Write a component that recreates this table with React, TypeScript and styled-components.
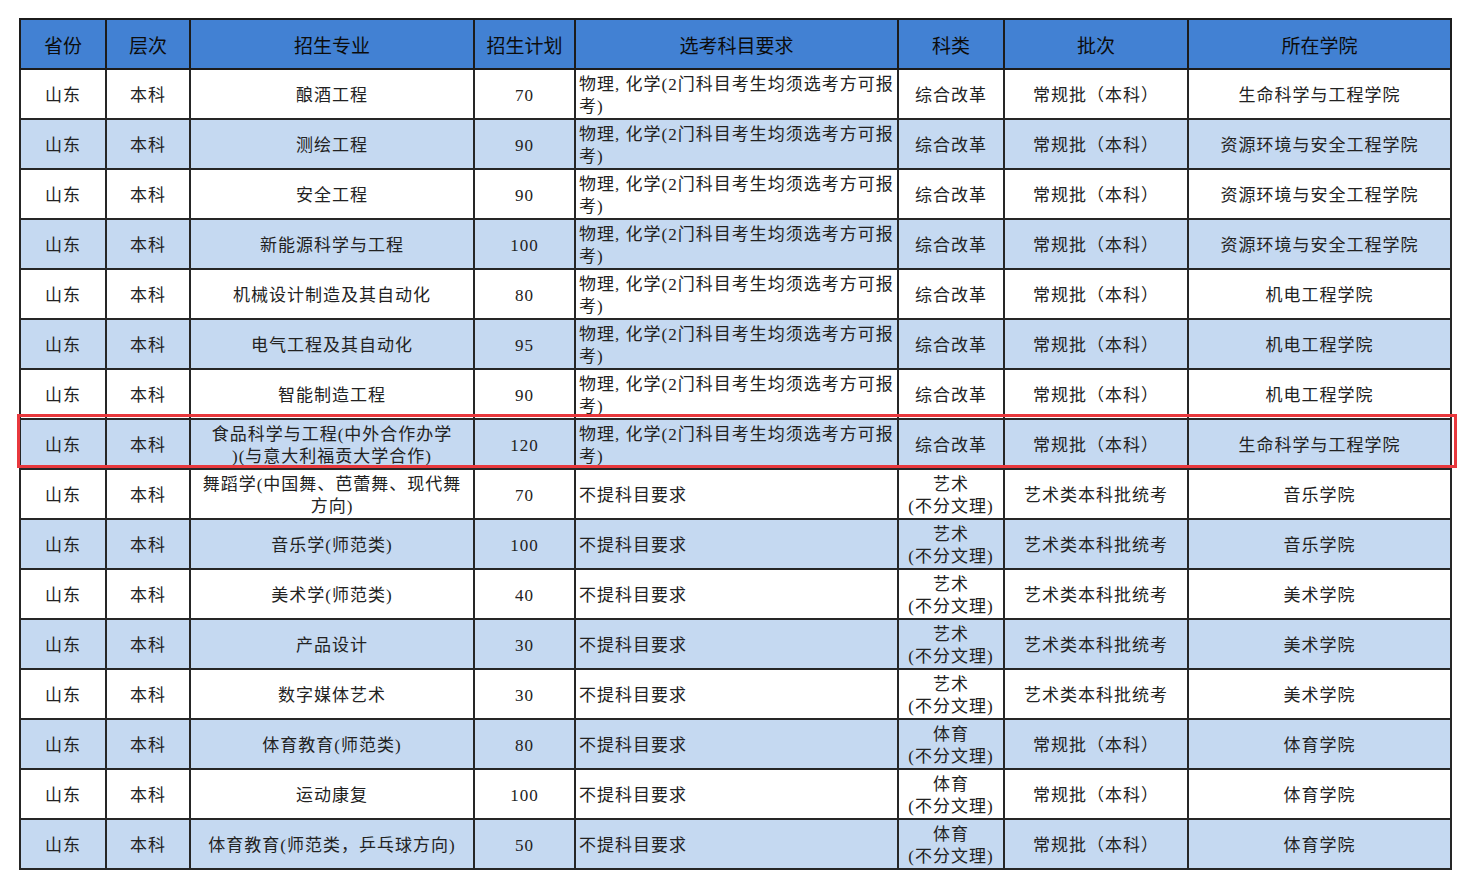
import React from 'react';
import styled, { createGlobalStyle } from 'styled-components';

type Row = {
  major: string[];
  plan: number;
  subjects: string[];
  kind: string[];
  batch: string;
  college: string;
};

const SCI = ['物理, 化学(2门科目考生均须选考方可报', '考)'];
const NONE = ['不提科目要求'];
const REFORM = ['综合改革'];
const ART = ['艺术', '(不分文理)'];
const PE = ['体育', '(不分文理)'];
const REGULAR = '常规批（本科）';
const ART_BATCH = '艺术类本科批统考';

const rows: Row[] = [
  { major: ['酿酒工程'], plan: 70, subjects: SCI, kind: REFORM, batch: REGULAR, college: '生命科学与工程学院' },
  { major: ['测绘工程'], plan: 90, subjects: SCI, kind: REFORM, batch: REGULAR, college: '资源环境与安全工程学院' },
  { major: ['安全工程'], plan: 90, subjects: SCI, kind: REFORM, batch: REGULAR, college: '资源环境与安全工程学院' },
  { major: ['新能源科学与工程'], plan: 100, subjects: SCI, kind: REFORM, batch: REGULAR, college: '资源环境与安全工程学院' },
  { major: ['机械设计制造及其自动化'], plan: 80, subjects: SCI, kind: REFORM, batch: REGULAR, college: '机电工程学院' },
  { major: ['电气工程及其自动化'], plan: 95, subjects: SCI, kind: REFORM, batch: REGULAR, college: '机电工程学院' },
  { major: ['智能制造工程'], plan: 90, subjects: SCI, kind: REFORM, batch: REGULAR, college: '机电工程学院' },
  {
    major: ['食品科学与工程(中外合作办学', ')(与意大利福贡大学合作)'],
    plan: 120,
    subjects: SCI,
    kind: REFORM,
    batch: REGULAR,
    college: '生命科学与工程学院',
  },
  { major: ['舞蹈学(中国舞、芭蕾舞、现代舞', '方向)'], plan: 70, subjects: NONE, kind: ART, batch: ART_BATCH, college: '音乐学院' },
  { major: ['音乐学(师范类)'], plan: 100, subjects: NONE, kind: ART, batch: ART_BATCH, college: '音乐学院' },
  { major: ['美术学(师范类)'], plan: 40, subjects: NONE, kind: ART, batch: ART_BATCH, college: '美术学院' },
  { major: ['产品设计'], plan: 30, subjects: NONE, kind: ART, batch: ART_BATCH, college: '美术学院' },
  { major: ['数字媒体艺术'], plan: 30, subjects: NONE, kind: ART, batch: ART_BATCH, college: '美术学院' },
  { major: ['体育教育(师范类)'], plan: 80, subjects: NONE, kind: PE, batch: REGULAR, college: '体育学院' },
  { major: ['运动康复'], plan: 100, subjects: NONE, kind: PE, batch: REGULAR, college: '体育学院' },
  { major: ['体育教育(师范类，乒乓球方向)'], plan: 50, subjects: NONE, kind: PE, batch: REGULAR, college: '体育学院' },
];

const columns = [
  { title: '省份', width: 86 },
  { title: '层次', width: 84 },
  { title: '招生专业', width: 284 },
  { title: '招生计划', width: 101 },
  { title: '选考科目要求', width: 323 },
  { title: '科类', width: 106 },
  { title: '批次', width: 184 },
  { title: '所在学院', width: 263 },
];

const HIGHLIGHT_ROW = 7;
const HEADER_H = 50;
const ROW_H = 50;

const Lines = ({ lines }: { lines: string[] }) => (
  <>
    {lines.map((l, i) => (
      <Line key={i}>{l}</Line>
    ))}
  </>
);

export default function App() {
  return (
    <>
      <GlobalStyle />
      <Page>
        <TableWrap>
          <Table>
            <colgroup>
              {columns.map((c) => (
                <col key={c.title} style={{ width: c.width }} />
              ))}
            </colgroup>
            <thead>
              <tr>
                {columns.map((c) => (
                  <HeadCell key={c.title}>{c.title}</HeadCell>
                ))}
              </tr>
            </thead>
            <tbody>
              {rows.map((r, i) => (
                <BodyRow key={i} $shaded={i % 2 === 1}>
                  <Cell>山东</Cell>
                  <Cell>本科</Cell>
                  <Cell>
                    <Lines lines={r.major} />
                  </Cell>
                  <Cell>{r.plan}</Cell>
                  <Cell $left>
                    <Lines lines={r.subjects} />
                  </Cell>
                  <Cell>
                    <Lines lines={r.kind} />
                  </Cell>
                  <Cell>{r.batch}</Cell>
                  <Cell>{r.college}</Cell>
                </BodyRow>
              ))}
            </tbody>
          </Table>
          <Highlight style={{ top: HEADER_H + HIGHLIGHT_ROW * ROW_H - 4 }} />
        </TableWrap>
      </Page>
    </>
  );
}

const GlobalStyle = createGlobalStyle`
  html, body {
    margin: 0;
    padding: 0;
    background: #ffffff;
  }
  body {
    font-family: "Liberation Serif", "Noto Sans CJK SC", serif;
    color: #222222;
  }
`;

const Page = styled.div`
  padding: 18px 0 0 19px;
  width: 1471px;
  height: 895px;
  box-sizing: border-box;
  overflow: hidden;
`;

const TableWrap = styled.div`
  position: relative;
  width: max-content;
`;

const Table = styled.table`
  border-collapse: collapse;
  table-layout: fixed;
  width: 1433px;
`;

const HeadCell = styled.th`
  height: ${HEADER_H - 2}px;
  padding: 0;
  background: #4281d3;
  border: 2px solid #1c1c1c;
  font-family: "Noto Sans CJK SC", sans-serif;
  font-size: 19px;
  font-weight: 400;
  color: #0c0c0c;
  text-align: center;
  vertical-align: middle;
`;

const BodyRow = styled.tr<{ $shaded: boolean }>`
  background: ${(p) => (p.$shaded ? '#c5d9f1' : '#ffffff')};
`;

const Cell = styled.td<{ $left?: boolean }>`
  height: ${ROW_H - 2}px;
  padding: 4px ${(p) => (p.$left ? '3px' : '2px')} 0;
  box-sizing: border-box;
  border: 2px solid #262626;
  font-size: 17px;
  line-height: 22px;
  letter-spacing: 1px;
  text-align: ${(p) => (p.$left ? 'left' : 'center')};
  vertical-align: middle;
  white-space: nowrap;
  overflow: hidden;
`;

const Line = styled.div`
  white-space: nowrap;
`;

const Highlight = styled.div`
  position: absolute;
  left: -2px;
  right: -5px;
  height: 48px;
  border: 3px solid #e8383d;
  pointer-events: none;
`;
